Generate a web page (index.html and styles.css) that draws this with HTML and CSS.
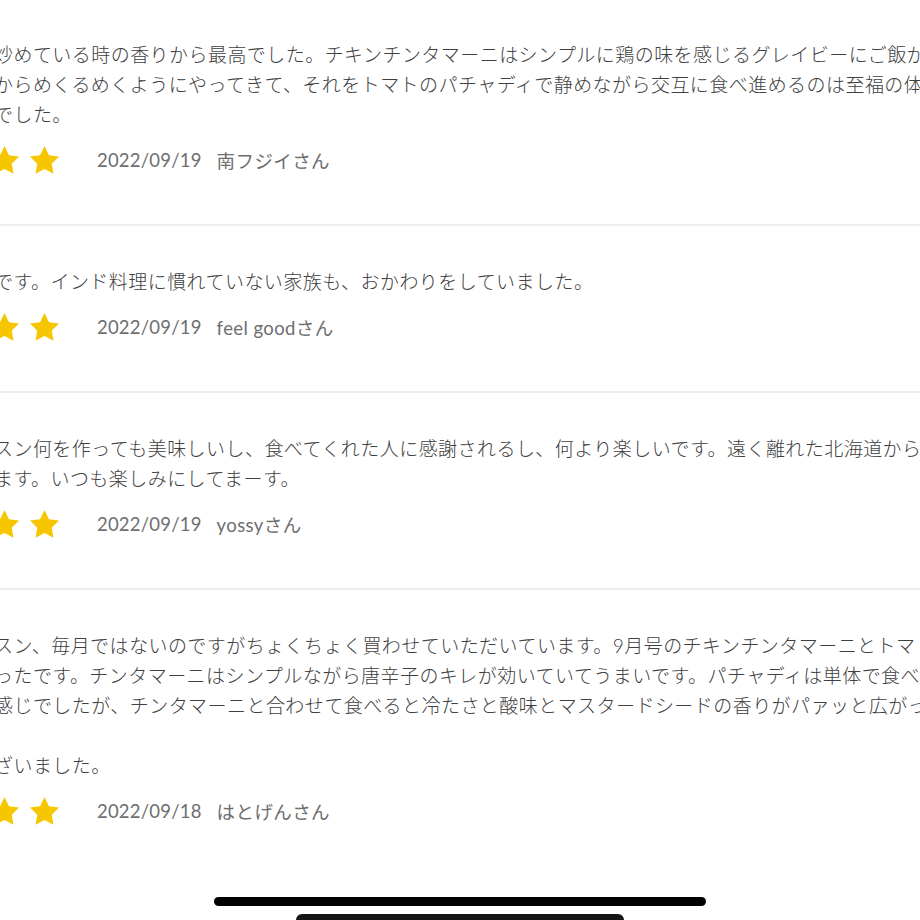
FILE: index.html
```html
<!DOCTYPE html>
<html lang="ja">
<head>
    <meta charset="UTF-8">
    <meta name="viewport" content="width=device-width, initial-scale=1.0">
    <title>レビュー</title>
    <link rel="stylesheet" href="styles.css">
</head>
<body>
    <div class="reviews">
        <div class="review">
            <p class="text">炒めている時の香りから最高でした。チキンチンタマーニはシンプルに鶏の味を感じるグレイビーにご飯が<br>からめくるめくようにやってきて、それをトマトのパチャディで静めながら交互に食べ進めるのは至福の体験<br>でした。</p>
            <div class="meta">
                <div class="stars">
                    <svg class="star" viewBox="2 2 20 19.2"><polygon points="12,2 15.09,8.26 22,9.27 17,14.14 18.18,21.02 12,17.77 5.82,21.02 7,14.14 2,9.27 8.91,8.26"/></svg>
                    <svg class="star" viewBox="2 2 20 19.2"><polygon points="12,2 15.09,8.26 22,9.27 17,14.14 18.18,21.02 12,17.77 5.82,21.02 7,14.14 2,9.27 8.91,8.26"/></svg>
                    <svg class="star" viewBox="2 2 20 19.2"><polygon points="12,2 15.09,8.26 22,9.27 17,14.14 18.18,21.02 12,17.77 5.82,21.02 7,14.14 2,9.27 8.91,8.26"/></svg>
                    <svg class="star" viewBox="2 2 20 19.2"><polygon points="12,2 15.09,8.26 22,9.27 17,14.14 18.18,21.02 12,17.77 5.82,21.02 7,14.14 2,9.27 8.91,8.26"/></svg>
                    <svg class="star" viewBox="2 2 20 19.2"><polygon points="12,2 15.09,8.26 22,9.27 17,14.14 18.18,21.02 12,17.77 5.82,21.02 7,14.14 2,9.27 8.91,8.26"/></svg>
                </div>
                <span class="date">2022/09/19</span>
                <span class="name">南フジイさん</span>
            </div>
        </div>

        <div class="review">
            <p class="text">です。インド料理に慣れていない家族も、おかわりをしていました。</p>
            <div class="meta">
                <div class="stars">
                    <svg class="star" viewBox="2 2 20 19.2"><polygon points="12,2 15.09,8.26 22,9.27 17,14.14 18.18,21.02 12,17.77 5.82,21.02 7,14.14 2,9.27 8.91,8.26"/></svg>
                    <svg class="star" viewBox="2 2 20 19.2"><polygon points="12,2 15.09,8.26 22,9.27 17,14.14 18.18,21.02 12,17.77 5.82,21.02 7,14.14 2,9.27 8.91,8.26"/></svg>
                    <svg class="star" viewBox="2 2 20 19.2"><polygon points="12,2 15.09,8.26 22,9.27 17,14.14 18.18,21.02 12,17.77 5.82,21.02 7,14.14 2,9.27 8.91,8.26"/></svg>
                    <svg class="star" viewBox="2 2 20 19.2"><polygon points="12,2 15.09,8.26 22,9.27 17,14.14 18.18,21.02 12,17.77 5.82,21.02 7,14.14 2,9.27 8.91,8.26"/></svg>
                    <svg class="star" viewBox="2 2 20 19.2"><polygon points="12,2 15.09,8.26 22,9.27 17,14.14 18.18,21.02 12,17.77 5.82,21.02 7,14.14 2,9.27 8.91,8.26"/></svg>
                </div>
                <span class="date">2022/09/19</span>
                <span class="name">feel goodさん</span>
            </div>
        </div>

        <div class="review">
            <p class="text">スン何を作っても美味しいし、食べてくれた人に感謝されるし、何より楽しいです。遠く離れた北海道から<br>ます。いつも楽しみにしてまーす。</p>
            <div class="meta">
                <div class="stars">
                    <svg class="star" viewBox="2 2 20 19.2"><polygon points="12,2 15.09,8.26 22,9.27 17,14.14 18.18,21.02 12,17.77 5.82,21.02 7,14.14 2,9.27 8.91,8.26"/></svg>
                    <svg class="star" viewBox="2 2 20 19.2"><polygon points="12,2 15.09,8.26 22,9.27 17,14.14 18.18,21.02 12,17.77 5.82,21.02 7,14.14 2,9.27 8.91,8.26"/></svg>
                    <svg class="star" viewBox="2 2 20 19.2"><polygon points="12,2 15.09,8.26 22,9.27 17,14.14 18.18,21.02 12,17.77 5.82,21.02 7,14.14 2,9.27 8.91,8.26"/></svg>
                    <svg class="star" viewBox="2 2 20 19.2"><polygon points="12,2 15.09,8.26 22,9.27 17,14.14 18.18,21.02 12,17.77 5.82,21.02 7,14.14 2,9.27 8.91,8.26"/></svg>
                    <svg class="star" viewBox="2 2 20 19.2"><polygon points="12,2 15.09,8.26 22,9.27 17,14.14 18.18,21.02 12,17.77 5.82,21.02 7,14.14 2,9.27 8.91,8.26"/></svg>
                </div>
                <span class="date">2022/09/19</span>
                <span class="name">yossyさん</span>
            </div>
        </div>

        <div class="review">
            <p class="text">スン、毎月ではないのですがちょくちょく買わせていただいています。9月号のチキンチンタマーニとトマト<br>ったです。チンタマーニはシンプルながら唐辛子のキレが効いていてうまいです。パチャディは単体で食べ<br>感じでしたが、チンタマーニと合わせて食べると冷たさと酸味とマスタードシードの香りがパァッと広がっ<br><br>ざいました。</p>
            <div class="meta">
                <div class="stars">
                    <svg class="star" viewBox="2 2 20 19.2"><polygon points="12,2 15.09,8.26 22,9.27 17,14.14 18.18,21.02 12,17.77 5.82,21.02 7,14.14 2,9.27 8.91,8.26"/></svg>
                    <svg class="star" viewBox="2 2 20 19.2"><polygon points="12,2 15.09,8.26 22,9.27 17,14.14 18.18,21.02 12,17.77 5.82,21.02 7,14.14 2,9.27 8.91,8.26"/></svg>
                    <svg class="star" viewBox="2 2 20 19.2"><polygon points="12,2 15.09,8.26 22,9.27 17,14.14 18.18,21.02 12,17.77 5.82,21.02 7,14.14 2,9.27 8.91,8.26"/></svg>
                    <svg class="star" viewBox="2 2 20 19.2"><polygon points="12,2 15.09,8.26 22,9.27 17,14.14 18.18,21.02 12,17.77 5.82,21.02 7,14.14 2,9.27 8.91,8.26"/></svg>
                    <svg class="star" viewBox="2 2 20 19.2"><polygon points="12,2 15.09,8.26 22,9.27 17,14.14 18.18,21.02 12,17.77 5.82,21.02 7,14.14 2,9.27 8.91,8.26"/></svg>
                </div>
                <span class="date">2022/09/18</span>
                <span class="name">はとげんさん</span>
            </div>
        </div>
    </div>

    <div class="home-bar"></div>
    <div class="home-tab"></div>
</body>
</html>
```

FILE: styles.css
```css
body {
    font-family: Lato, "Noto Sans CJK JP", sans-serif;
    background-color: #fff;
    color: #404040;
    margin: 0;
    width: 920px;
    height: 920px;
    overflow: hidden;
    position: relative;
}

.reviews {
    margin-top: -2px;
    margin-left: -6px;
    border-top: 1px solid #f2f2f2;
}

.review {
    padding: 41px 0 49px;
    border-bottom: 2px solid #eeeeee;
}

.review:last-child {
    border-bottom: none;
}

.text {
    margin: 0;
    font-size: 19px;
    font-weight: 300;
    line-height: 30px;
    letter-spacing: 0.45px;
    white-space: nowrap;
}

.meta {
    display: flex;
    align-items: center;
    height: 30px;
    margin-top: 15px;
    color: #6e6e6e;
    font-size: 18.5px;
    white-space: nowrap;
}

.stars {
    display: flex;
    gap: 11px;
    margin-left: -124px;
}

.star {
    width: 29px;
    height: 28px;
    fill: #f6c700;
}

.date {
    margin-left: 38px;
    letter-spacing: 0.2px;
}

.name {
    margin-left: 15px;
    letter-spacing: 0.4px;
}

.home-bar {
    position: absolute;
    left: 214px;
    top: 897px;
    width: 492px;
    height: 9px;
    border-radius: 5px;
    background: #000;
}

.home-tab {
    position: absolute;
    left: 296px;
    top: 914px;
    width: 328px;
    height: 12px;
    border-radius: 6px 6px 0 0;
    background: #151515;
}
```
